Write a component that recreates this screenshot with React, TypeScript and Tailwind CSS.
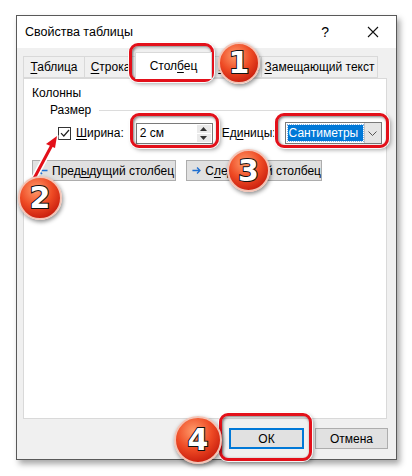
import React from "react";

const font = "font-['Liberation_Sans','Arimo',sans-serif]";

const U = ({ children }: { children: React.ReactNode }) => (
  <span className="underline underline-offset-2 decoration-1">{children}</span>
);

const Badge = ({ n, className }: { n: string; className: string }) => (
  <div
    className={`absolute rounded-full flex items-center justify-center border-[2px] border-[#f3c3b5] bg-[radial-gradient(circle_at_40%_30%,#ff9b6b,#ee4a24_45%,#c81d0d_80%,#a01208)] shadow-[1px_2px_4px_rgba(0,0,0,0.45)] ${className}`}
  >
    <span className="font-['DejaVu_Sans',sans-serif] font-bold text-[30px] leading-none text-white [-webkit-text-stroke:2px_#111] [paint-order:stroke_fill]">
      {n}
    </span>
  </div>
);

const Highlight = ({ className }: { className: string }) => (
  <div
    className={`absolute rounded-[9px] border-[3px] border-[#e3101a] shadow-[0_0_0_1px_rgba(255,255,255,0.9),2px_2px_4px_rgba(0,0,0,0.35),inset_1px_1px_3px_rgba(0,0,0,0.55)] ${className}`}
  />
);

const Tab = ({
  children,
  w,
  selected,
}: {
  children: React.ReactNode;
  w: string;
  selected?: boolean;
}) =>
  selected ? (
    <div
      className={`${w} h-[27px] -mx-[2px] z-10 bg-white border border-[#d9d9d9] border-b-0 flex items-center justify-center -mb-[1px] pb-[1px]`}
    >
      {children}
    </div>
  ) : (
    <div
      className={`${w} h-[22px] bg-[#f0f0f0] border border-[#d9d9d9] border-l-0 first:border-l flex items-center justify-center`}
    >
      {children}
    </div>
  );

const Btn = ({ children, className }: { children: React.ReactNode; className: string }) => (
  <div
    className={`h-[21px] bg-[#e1e1e1] border border-[#adadad] flex items-center whitespace-nowrap ${className}`}
  >
    {children}
  </div>
);

export default function App() {
  return (
    <div className={`relative w-[412px] h-[476px] bg-white overflow-hidden pt-[15px] pl-[16px] text-[12px] text-black whitespace-nowrap ${font}`}>
      {/* Dialog */}
      <div className="w-[381px] h-[445px] border border-[#595959] bg-[#f0f0f0] flex flex-col shadow-[3px_4px_6px_rgba(0,0,0,0.35)]">
        {/* Title bar */}
        <div className="h-[32px] bg-white flex items-center pl-[8px] shrink-0">
          <span className="text-[12.5px]">Свойства таблицы</span>
          <span className="ml-auto mr-[38px] text-[14px]">?</span>
          <svg width="12" height="12" viewBox="0 0 12 12" className="mr-[17px]">
            <path d="M1 1L11 11M11 1L1 11" stroke="#111" strokeWidth="1.1" />
          </svg>
        </div>

        {/* Tabs */}
        <div className="flex items-end pl-[6px] h-[30px] shrink-0">
          <Tab w="w-[62px]">
            <span><U>Т</U>аблица</span>
          </Tab>
          <Tab w="w-[52px]">
            <span><U>С</U>трока</span>
          </Tab>
          <Tab w="w-[77px]" selected>
            <span>Стол<U>б</U>ец</span>
          </Tab>
          <Tab w="w-[52px]">
            <span className="pl-[6px]"><U>Я</U>чейка</span>
          </Tab>
          <Tab w="w-[116px]">
            <span><U>З</U>амещающий текст</span>
          </Tab>
        </div>

        {/* Panel */}
        <div className="ml-[6px] w-[364px] h-[341px] bg-white border border-[#d9d9d9] shrink-0 pl-[8px] pt-[4px]">
          <div className="h-[20px] flex items-center">Колонны</div>
          <div className="h-[14px] flex items-center pl-[18px]">
            <span>Размер</span>
            <div className="ml-[8px] flex-1 mr-[6px] h-px bg-[#dcdcdc]" />
          </div>
          {/* Width row */}
          <div className="h-[22px] mt-[5px] flex items-center pl-[26px]">
            <div className="w-[13px] h-[13px] border border-[#333] flex items-center justify-center bg-white">
              <svg width="10" height="10" viewBox="0 0 10 10">
                <path d="M1 5.2L3.8 8L9 2" stroke="#222" strokeWidth="1.2" fill="none" />
              </svg>
            </div>
            <span className="ml-[5px]"><U>Ш</U>ирина:</span>
            <div className="ml-[12px] w-[77px] h-[21px] border border-[#7a7a7a] flex items-center bg-white">
              <span className="pl-[3px]">2 см</span>
              <div className="ml-auto mr-[1px] w-[14px] h-[17px] flex flex-col gap-[1px]">
                <div className="flex-1 bg-[#eaeaea] flex items-center justify-center">
                  <svg width="7" height="4" viewBox="0 0 7 4"><path d="M0 4L3.5 0L7 4Z" fill="#333" /></svg>
                </div>
                <div className="flex-1 bg-[#eaeaea] flex items-center justify-center">
                  <svg width="7" height="4" viewBox="0 0 7 4"><path d="M0 0L3.5 4L7 0Z" fill="#333" /></svg>
                </div>
              </div>
            </div>
            <span className="ml-[9px]">Ед<U>и</U>ницы:</span>
            <div className="ml-[9px] w-[97px] h-[22px] border border-[#7a7a7a] flex items-center bg-white p-[2px]">
              <div className="flex-1 h-full bg-[#0078d7] text-white flex items-center pl-[1px] outline-1 outline-dotted outline-[#7fb3e8]">
                Сантиметры
              </div>
              <div className="w-[17px] h-[20px] -my-[2px] -mr-[2px] ml-[1px] bg-[#e5e5e5] border-l border-[#c4c4c4] flex items-center justify-center">
                <svg width="9" height="5" viewBox="0 0 9 5"><path d="M0.5 0.5L4.5 4.5L8.5 0.5" stroke="#555" fill="none" /></svg>
              </div>
            </div>
          </div>
          {/* Prev / next */}
          <div className="flex mt-[16px] gap-[10px]">
            <Btn className="w-[144px] pl-[4px]">
              <svg width="11" height="9" viewBox="0 0 11 9" className="mr-[4px]">
                <path d="M10.5 4.5H1.5M5 1L1.5 4.5L5 8" stroke="#1f6fd1" strokeWidth="1.6" fill="none" />
              </svg>
              <span>Пред<U>ы</U>дущий столбец</span>
            </Btn>
            <Btn className="w-[136px] pl-[5px]">
              <svg width="11" height="9" viewBox="0 0 11 9" className="mr-[4px]">
                <path d="M0.5 4.5H9.5M6 1L9.5 4.5L6 8" stroke="#1f6fd1" strokeWidth="1.6" fill="none" />
              </svg>
              <span>С<U>л</U>едующий столбец</span>
            </Btn>
          </div>
        </div>

        {/* Footer */}
        <div className="flex justify-end gap-[11px] pr-[8px] pt-[9px]">
          <div className="w-[75px] h-[21px] bg-[#e1e1e1] border-[2px] border-[#0078d7] flex items-center justify-center">
            ОК
          </div>
          <div className="w-[73px] h-[21px] bg-[#e1e1e1] border border-[#adadad] flex items-center justify-center">
            Отмена
          </div>
        </div>
      </div>

      {/* Overlays */}
      <Highlight className="left-[129px] top-[43px] w-[85px] h-[39px]" />
      <Highlight className="left-[130px] top-[113px] w-[89px] h-[35px]" />
      <Highlight className="left-[275px] top-[113px] w-[114px] h-[35px]" />
      <Highlight className="left-[219px] top-[413px] w-[93px] h-[48px]" />

      <svg className="absolute left-0 top-0" width="412" height="476" viewBox="0 0 412 476">
        <path d="M30 186L53 143" stroke="white" strokeWidth="6" strokeLinecap="round" />
        <path d="M57 136L45 144L56 149Z" fill="white" stroke="white" strokeWidth="3" strokeLinejoin="round" />
        <path d="M30 186L53 143" stroke="#e3101a" strokeWidth="3" strokeLinecap="round" />
        <path d="M57 136L46 144L55 148Z" fill="#e3101a" />
      </svg>

      <Badge n="1" className="left-[218px] top-[42px] w-[42px] h-[42px]" />
      <Badge n="2" className="left-[18px] top-[176px] w-[44px] h-[44px]" />
      <Badge n="3" className="left-[227px] top-[149px] w-[43px] h-[43px]" />
      <Badge n="4" className="left-[174px] top-[416px] w-[48px] h-[48px]" />
    </div>
  );
}
